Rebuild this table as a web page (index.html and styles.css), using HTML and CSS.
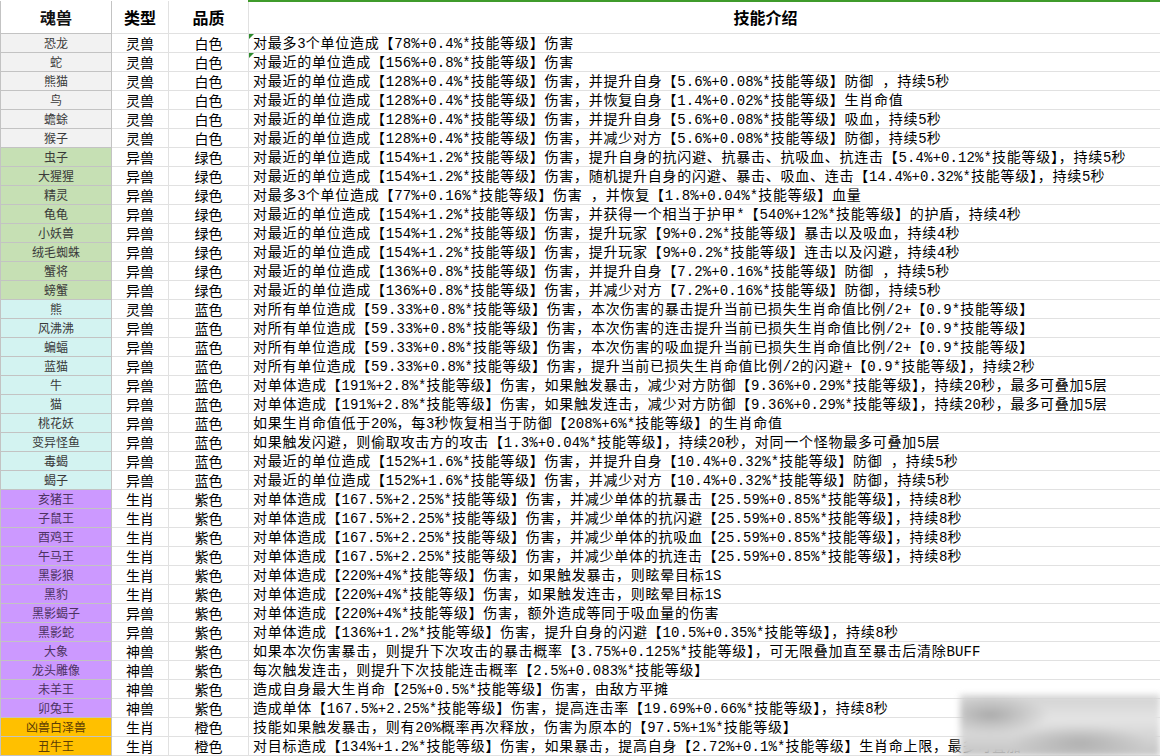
FILE: index.html
```html
<!DOCTYPE html>
<html lang="zh-CN">
<head>
<meta charset="utf-8">
<title>魂兽技能</title>
<link rel="stylesheet" href="styles.css">
</head>
<body>
<div class="sheet">
<table class="grid">
<colgroup><col class="c1"><col class="c2"><col class="c3"><col class="c4"></colgroup>
<thead>
<tr class="head"><th class="nm">魂兽</th><th>类型</th><th>品质</th><th class="sel">技能介绍</th></tr>
</thead>
<tbody>
<tr><td class="nm w">恐龙</td><td>灵兽</td><td>白色</td><td class="sk tri">对最多<span class="n">3</span>个单位造成【<span class="n">78%+0.4%*</span>技能等级】伤害</td></tr>
<tr><td class="nm w">蛇</td><td>灵兽</td><td>白色</td><td class="sk tri">对最近的单位造成【<span class="n">156%+0.8%*</span>技能等级】伤害</td></tr>
<tr><td class="nm w">熊猫</td><td>灵兽</td><td>白色</td><td class="sk">对最近的单位造成【<span class="n">128%+0.4%*</span>技能等级】伤害，并提升自身【<span class="n">5.6%+0.08%*</span>技能等级】防御<span class="n"> </span>，持续<span class="n">5</span>秒</td></tr>
<tr><td class="nm w">鸟</td><td>灵兽</td><td>白色</td><td class="sk">对最近的单位造成【<span class="n">128%+0.4%*</span>技能等级】伤害，并恢复自身【<span class="n">1.4%+0.02%*</span>技能等级】生肖命值</td></tr>
<tr><td class="nm w">蟾蜍</td><td>灵兽</td><td>白色</td><td class="sk">对最近的单位造成【<span class="n">128%+0.4%*</span>技能等级】伤害，并提升自身【<span class="n">5.6%+0.08%*</span>技能等级】吸血，持续<span class="n">5</span>秒</td></tr>
<tr><td class="nm w">猴子</td><td>灵兽</td><td>白色</td><td class="sk">对最近的单位造成【<span class="n">128%+0.4%*</span>技能等级】伤害，并减少对方【<span class="n">5.6%+0.08%*</span>技能等级】防御，持续<span class="n">5</span>秒</td></tr>
<tr><td class="nm g">虫子</td><td>异兽</td><td>绿色</td><td class="sk">对最近的单位造成【<span class="n">154%+1.2%*</span>技能等级】伤害，提升自身的抗闪避、抗暴击、抗吸血、抗连击【<span class="n">5.4%+0.12%*</span>技能等级】，持续<span class="n">5</span>秒</td></tr>
<tr><td class="nm g">大猩猩</td><td>异兽</td><td>绿色</td><td class="sk">对最近的单位造成【<span class="n">154%+1.2%*</span>技能等级】伤害，随机提升自身的闪避、暴击、吸血、连击【<span class="n">14.4%+0.32%*</span>技能等级】，持续<span class="n">5</span>秒</td></tr>
<tr><td class="nm g">精灵</td><td>异兽</td><td>绿色</td><td class="sk">对最多<span class="n">3</span>个单位造成【<span class="n">77%+0.16%*</span>技能等级】伤害<span class="n"> </span>，并恢复【<span class="n">1.8%+0.04%*</span>技能等级】血量</td></tr>
<tr><td class="nm g">龟龟</td><td>异兽</td><td>绿色</td><td class="sk">对最近的单位造成【<span class="n">154%+1.2%*</span>技能等级】伤害，并获得一个相当于护甲<span class="n">*</span>【<span class="n">540%+12%*</span>技能等级】的护盾，持续<span class="n">4</span>秒</td></tr>
<tr><td class="nm g">小妖兽</td><td>异兽</td><td>绿色</td><td class="sk">对最近的单位造成【<span class="n">154%+1.2%*</span>技能等级】伤害，提升玩家【<span class="n">9%+0.2%*</span>技能等级】暴击以及吸血，持续<span class="n">4</span>秒</td></tr>
<tr><td class="nm g">绒毛蜘蛛</td><td>异兽</td><td>绿色</td><td class="sk">对最近的单位造成【<span class="n">154%+1.2%*</span>技能等级】伤害，提升玩家【<span class="n">9%+0.2%*</span>技能等级】连击以及闪避，持续<span class="n">4</span>秒</td></tr>
<tr><td class="nm g">蟹将</td><td>异兽</td><td>绿色</td><td class="sk">对最近的单位造成【<span class="n">136%+0.8%*</span>技能等级】伤害，并提升自身【<span class="n">7.2%+0.16%*</span>技能等级】防御<span class="n"> </span>，持续<span class="n">5</span>秒</td></tr>
<tr><td class="nm g">螃蟹</td><td>异兽</td><td>绿色</td><td class="sk">对最近的单位造成【<span class="n">136%+0.8%*</span>技能等级】伤害，并减少对方【<span class="n">7.2%+0.16%*</span>技能等级】防御，持续<span class="n">5</span>秒</td></tr>
<tr><td class="nm b">熊</td><td>灵兽</td><td>蓝色</td><td class="sk">对所有单位造成【<span class="n">59.33%+0.8%*</span>技能等级】伤害，本次伤害的暴击提升当前已损失生肖命值比例<span class="n">/2+</span>【<span class="n">0.9*</span>技能等级】</td></tr>
<tr><td class="nm b">风沸沸</td><td>异兽</td><td>蓝色</td><td class="sk">对所有单位造成【<span class="n">59.33%+0.8%*</span>技能等级】伤害，本次伤害的连击提升当前已损失生肖命值比例<span class="n">/2+</span>【<span class="n">0.9*</span>技能等级】</td></tr>
<tr><td class="nm b">蝙蝠</td><td>异兽</td><td>蓝色</td><td class="sk">对所有单位造成【<span class="n">59.33%+0.8%*</span>技能等级】伤害，本次伤害的吸血提升当前已损失生肖命值比例<span class="n">/2+</span>【<span class="n">0.9*</span>技能等级】</td></tr>
<tr><td class="nm b">蓝猫</td><td>异兽</td><td>蓝色</td><td class="sk">对所有单位造成【<span class="n">59.33%+0.8%*</span>技能等级】伤害，提升当前已损失生肖命值比例<span class="n">/2</span>的闪避<span class="n">+</span>【<span class="n">0.9*</span>技能等级】，持续<span class="n">2</span>秒</td></tr>
<tr><td class="nm b">牛</td><td>异兽</td><td>蓝色</td><td class="sk">对单体造成【<span class="n">191%+2.8%*</span>技能等级】伤害，如果触发暴击，减少对方防御【<span class="n">9.36%+0.29%*</span>技能等级】，持续<span class="n">20</span>秒，最多可叠加<span class="n">5</span>层</td></tr>
<tr><td class="nm b">猫</td><td>异兽</td><td>蓝色</td><td class="sk">对单体造成【<span class="n">191%+2.8%*</span>技能等级】伤害，如果触发连击，减少对方防御【<span class="n">9.36%+0.29%*</span>技能等级】，持续<span class="n">20</span>秒，最多可叠加<span class="n">5</span>层</td></tr>
<tr><td class="nm b">桃花妖</td><td>异兽</td><td>蓝色</td><td class="sk">如果生肖命值低于<span class="n">20%</span>，每<span class="n">3</span>秒恢复相当于防御【<span class="n">208%+6%*</span>技能等级】的生肖命值</td></tr>
<tr><td class="nm b">变异怪鱼</td><td>异兽</td><td>蓝色</td><td class="sk">如果触发闪避，则偷取攻击方的攻击【<span class="n">1.3%+0.04%*</span>技能等级】，持续<span class="n">20</span>秒，对同一个怪物最多可叠加<span class="n">5</span>层</td></tr>
<tr><td class="nm b">毒蝎</td><td>异兽</td><td>蓝色</td><td class="sk">对最近的单位造成【<span class="n">152%+1.6%*</span>技能等级】伤害，并提升自身【<span class="n">10.4%+0.32%*</span>技能等级】防御<span class="n"> </span>，持续<span class="n">5</span>秒</td></tr>
<tr><td class="nm b">蝎子</td><td>异兽</td><td>蓝色</td><td class="sk">对最近的单位造成【<span class="n">152%+1.6%*</span>技能等级】伤害，并减少对方【<span class="n">10.4%+0.32%*</span>技能等级】防御，持续<span class="n">5</span>秒</td></tr>
<tr><td class="nm p">亥猪王</td><td>生肖</td><td>紫色</td><td class="sk">对单体造成【<span class="n">167.5%+2.25%*</span>技能等级】伤害，并减少单体的抗暴击【<span class="n">25.59%+0.85%*</span>技能等级】，持续<span class="n">8</span>秒</td></tr>
<tr><td class="nm p">子鼠王</td><td>生肖</td><td>紫色</td><td class="sk">对单体造成【<span class="n">167.5%+2.25%*</span>技能等级】伤害，并减少单体的抗闪避【<span class="n">25.59%+0.85%*</span>技能等级】，持续<span class="n">8</span>秒</td></tr>
<tr><td class="nm p">酉鸡王</td><td>生肖</td><td>紫色</td><td class="sk">对单体造成【<span class="n">167.5%+2.25%*</span>技能等级】伤害，并减少单体的抗吸血【<span class="n">25.59%+0.85%*</span>技能等级】，持续<span class="n">8</span>秒</td></tr>
<tr><td class="nm p">午马王</td><td>生肖</td><td>紫色</td><td class="sk">对单体造成【<span class="n">167.5%+2.25%*</span>技能等级】伤害，并减少单体的抗连击【<span class="n">25.59%+0.85%*</span>技能等级】，持续<span class="n">8</span>秒</td></tr>
<tr><td class="nm p">黑影狼</td><td>生肖</td><td>紫色</td><td class="sk">对单体造成【<span class="n">220%+4%*</span>技能等级】伤害，如果触发暴击，则眩晕目标<span class="n">1S</span></td></tr>
<tr><td class="nm p">黑豹</td><td>生肖</td><td>紫色</td><td class="sk">对单体造成【<span class="n">220%+4%*</span>技能等级】伤害，如果触发连击，则眩晕目标<span class="n">1S</span></td></tr>
<tr><td class="nm p">黑影蝎子</td><td>异兽</td><td>紫色</td><td class="sk">对单体造成【<span class="n">220%+4%*</span>技能等级】伤害，额外造成等同于吸血量的伤害</td></tr>
<tr><td class="nm p">黑影蛇</td><td>异兽</td><td>紫色</td><td class="sk">对单体造成【<span class="n">136%+1.2%*</span>技能等级】伤害，提升自身的闪避【<span class="n">10.5%+0.35%*</span>技能等级】，持续<span class="n">8</span>秒</td></tr>
<tr><td class="nm p">大象</td><td>神兽</td><td>紫色</td><td class="sk">如果本次伤害暴击，则提升下次攻击的暴击概率【<span class="n">3.75%+0.125%*</span>技能等级】，可无限叠加直至暴击后清除<span class="n">BUFF</span></td></tr>
<tr><td class="nm p">龙头雕像</td><td>神兽</td><td>紫色</td><td class="sk">每次触发连击，则提升下次技能连击概率【<span class="n">2.5%+0.083%*</span>技能等级】</td></tr>
<tr><td class="nm p">未羊王</td><td>神兽</td><td>紫色</td><td class="sk">造成自身最大生肖命【<span class="n">25%+0.5%*</span>技能等级】伤害，由敌方平摊</td></tr>
<tr><td class="nm p">卯兔王</td><td>神兽</td><td>紫色</td><td class="sk">造成单体【<span class="n">167.5%+2.25%*</span>技能等级】伤害，提高连击率【<span class="n">19.69%+0.66%*</span>技能等级】，持续<span class="n">8</span>秒</td></tr>
<tr><td class="nm o">凶兽白泽兽</td><td>生肖</td><td>橙色</td><td class="sk">技能如果触发暴击，则有<span class="n">20%</span>概率再次释放，伤害为原本的【<span class="n">97.5%+1%*</span>技能等级】</td></tr>
<tr><td class="nm o">丑牛王</td><td>生肖</td><td>橙色</td><td class="sk">对目标造成【<span class="n">134%+1.2%*</span>技能等级】伤害，如果暴击，提高自身【<span class="n">2.72%+0.1%*</span>技能等级】生肖命上限，最多可叠加</td></tr>
</tbody>
</table>
<div class="wm"></div>
</div>
</body>
</html>
```
FILE: styles.css
```css
html, body {
  margin: 0;
  padding: 0;
  background: #ffffff;
}
body {
  font-family: "Noto Sans CJK SC", "Noto Sans", sans-serif;
  color: #000;
}
.sheet {
  position: relative;
  width: 1160px;
  height: 756px;
  overflow: hidden;
  background: #fff;
}
.grid {
  border-collapse: collapse;
  table-layout: fixed;
  width: 1160px;
}
.c1 { width: 111px; }
.c2 { width: 57px; }
.c3 { width: 80px; }
.c4 { width: 912px; }
.grid th,
.grid td {
  padding: 0;
  border: 1px solid #e1e1e1;
  white-space: nowrap;
  overflow: hidden;
  text-align: center;
  vertical-align: middle;
}
.grid tbody tr { height: 19px; }
.grid tbody td {
  font-size: 14px;
  line-height: 14px;
}
.head { height: 32px; }
.head th {
  border-top: none;
  font-size: 16px;
  font-weight: 700;
  line-height: 20px;
  background: #fff;
}
.head th.sel {
  border-top: 2px solid #3f9b2b;
  padding-left: 122px;
}
.grid .nm {
  border-color: #c3c3c3;
  font-size: 12px;
  color: #3a3a3a;
}
.head th.nm { color: #111; font-size: 16px; }
.w { background: #f2f2f2; }
.g { background: #c6e0b4; }
.b { background: #d3f3f1; }
.p { background: #cc99ff; }
.o { background: #ffc000; }
.grid td.p { color: #4d3262; }
.grid td.o { color: #5c3d05; }
.grid td.sk {
  text-align: left;
  padding-left: 4px;
  font-size: 14px;
  letter-spacing: 0.75px;
  overflow: visible;
}
.n {
  font-family: "Liberation Mono", monospace;
  font-size: 14px;
  line-height: 14px;
  letter-spacing: 0.1px;
}
.tri { position: relative; }
.tri::before {
  content: "";
  position: absolute;
  left: 0;
  top: 0;
  border-top: 5px solid #2e8b2e;
  border-right: 5px solid transparent;
}
.wm {
  position: absolute;
  right: 0;
  bottom: 0;
  width: 200px;
  height: 61px;
  background:
    radial-gradient(ellipse 60px 20px at 30px 20px, #a9a9a9, transparent),
    radial-gradient(ellipse 70px 18px at 120px 48px, #b0b0b0, transparent),
    linear-gradient(180deg, #d2d2d2, #e4e4e4 40%, #c4c4c4);
  filter: blur(3px);
}
```
